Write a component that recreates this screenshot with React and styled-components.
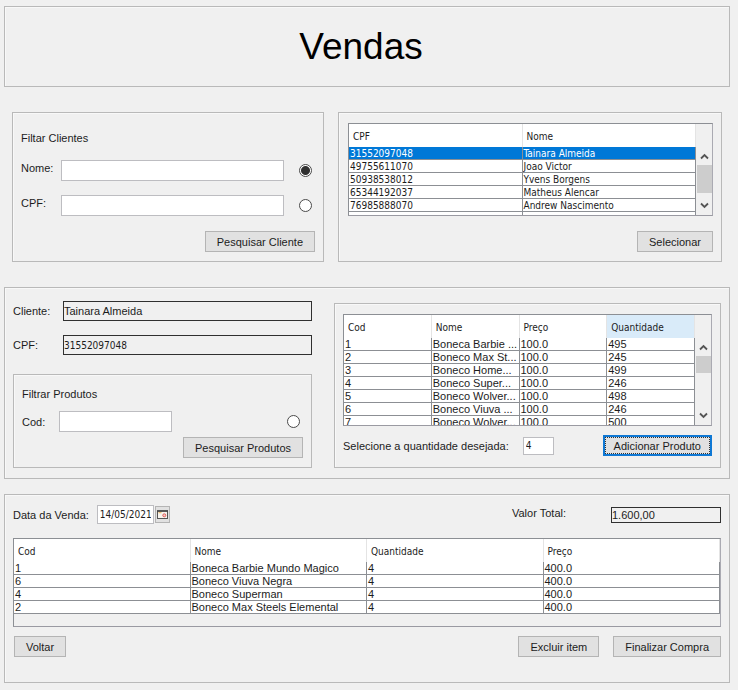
import React, { useState } from "react";
import styled, { createGlobalStyle, css } from "styled-components";

const ui = '"Liberation Sans", Arial, sans-serif';
const small = '"DejaVu Sans Condensed", "Noto Sans", sans-serif';
const line = "#b9b9b9";
const grid = "#8c8f94";

const GlobalStyle = createGlobalStyle`
  * { box-sizing: border-box; }
  body { margin: 0; background: #f0f0f0; color: #1c1c1c; font: 11px/16px ${ui}; }
  button, input { font: inherit; color: inherit; margin: 0; }
`;

const Page = styled.main`
  display: flex;
  flex-direction: column;
  padding: 6px 8px 6px 4px;
`;

const Panel = styled.section`
  border: 1px solid ${line};
  box-shadow: inset 1px 1px 0 #f8f8f8;
`;

const TitlePanel = styled(Panel)`
  padding: 17px 0 18px;
  text-align: center;
`;

const Title = styled.h1`
  margin: 0;
  padding: 1px 12px 0 0;
  font: 400 37px/43px ${ui};
  color: #000;
`;

const ClientRow = styled.div`
  display: grid;
  grid-template-columns: 312fr 384fr;
  gap: 14px;
  margin: 25px 8px;
`;

const ClientFilter = styled(Panel)`
  display: flex;
  flex-direction: column;
  padding: 17px 8px 9px;
`;

const Heading = styled.h2`
  margin: 0;
  font-size: 11px;
  line-height: 16px;
  font-weight: 400;
`;

const FilterLine = styled.div`
  display: grid;
  grid-template-columns: 40px 1fr 14px;
  align-items: center;
  margin-top: 14px;
  padding-right: 2px;
`;

const FilterLabel = styled.label`
  padding-bottom: 5px;
`;

const TextInput = styled.input`
  width: 100%;
  min-width: 0;
  height: 21px;
  padding: 0 3px;
  border: 1px solid #bdbdc1;
  border-radius: 0;
  background: #fff;
  outline: none;
`;

const FilterInput = styled(TextInput)`
  width: calc(100% - 15px);
`;

const Radio = styled.input`
  appearance: none;
  width: 13px;
  height: 13px;
  border: 1px solid #4a4a4a;
  border-radius: 50%;
  background: #fff;
  &:checked {
    background: radial-gradient(circle, #303030 0 4px, #fff 5px);
  }
`;

const Button = styled.button`
  height: 21px;
  padding: 0 11px;
  border: 1px solid #b4b4b4;
  border-radius: 0;
  background: #e1e1e1;
  line-height: 18px;
  white-space: nowrap;
  ${(p) =>
    p.$focused &&
    css`
      padding: 0 9px;
      border: 2px solid #0f78d4;
      outline: 1px dotted #333;
      outline-offset: -3px;
    `}
`;

const Actions = styled.div`
  display: flex;
  justify-content: flex-end;
  margin-top: ${(p) => p.$gap}px;
`;

const ListPanel = styled(Panel)`
  padding: ${(p) => (p.$tight ? "10px 8px 11px" : "10px 8px 9px 9px")};
`;

const Viewport = styled.div`
  display: grid;
  grid-template-columns: ${(p) => (p.$scroll ? "1fr 16px" : "1fr")};
  height: ${(p) => p.$height}px;
  overflow: hidden;
  border: 1px solid ${grid};
  border-right-color: #aaaab2;
  border-bottom-color: #9a9aa2;
`;

const Clip = styled.div`
  overflow: hidden;
`;

const Table = styled.table`
  width: 100%;
  table-layout: fixed;
  border-collapse: separate;
  border-spacing: 0;
`;

const Th = styled.th`
  height: 23px;
  padding: 3px 0 0 4px;
  border-right: 1px solid #e4e4e4;
  background: ${(p) => (p.$hover ? "#d9ebf9" : "#fff")};
  font: 400 10px/18px ${small};
  text-align: left;
`;

const Td = styled.td`
  height: 13px;
  padding: ${(p) => (p.$small ? "1px 0 0 1px" : "0 0 0 1px")};
  overflow: hidden;
  border-right: 1px solid ${grid};
  border-bottom: 1px solid ${grid};
  background: ${(p) => (p.$selected ? "#0078d7" : "#fff")};
  color: ${(p) => (p.$selected ? "#fff" : "inherit")};
  font: ${(p) => (p.$small ? `10px/11px ${small}` : `11px/12px ${ui}`)};
  white-space: nowrap;
`;

const Scrollbar = styled.div`
  display: flex;
  flex-direction: column;
  align-items: center;
  padding: 27px 0 4px 1px;
  background: #f0f0f0;
`;

const Thumb = styled.div`
  width: 100%;
  height: ${(p) => p.$height}px;
  margin: 3px 0 auto;
  background: #cdcdcd;
`;

const Arrow = ({ down }) => (
  <svg width="9" height="11" viewBox="0 0 9 11" aria-hidden="true">
    <path
      d={down ? "M1 3.5 4.5 7 8 3.5" : "M1 7.5 4.5 4 8 7.5"}
      fill="none"
      stroke="#555"
      strokeWidth="1.8"
    />
  </svg>
);

const SalePanel = styled(Panel)`
  display: grid;
  grid-template-columns: 299fr 387fr;
  gap: 22px;
  padding: 13px 8px 10px;
`;

const ClientInfo = styled.div`
  display: flex;
  flex-direction: column;
`;

const InfoLine = styled.div`
  display: grid;
  grid-template-columns: 50px 1fr;
  align-items: center;
  margin-bottom: 14px;
`;

const ReadOnly = styled.input`
  width: 100%;
  min-width: 0;
  height: ${(p) => (p.$short ? 16 : 20)}px;
  padding: 0;
  border: 1px solid #303030;
  border-radius: 0;
  background: #f0f0f0;
  outline: none;
  font: ${(p) => (p.$small ? `10px ${small}` : `11px ${ui}`)};
`;

const ProductFilter = styled(Panel)`
  margin-top: 5px;
  padding: 11px 8px 9px;
`;

const CodLine = styled.div`
  display: grid;
  grid-template-columns: 37px 113px 1fr 14px;
  align-items: center;
  margin-top: 9px;
  padding-right: 2px;
`;

const ProductList = styled(ListPanel)`
  margin-top: 2px;
`;

const QuantityLine = styled.div`
  display: flex;
  align-items: center;
  margin-top: 9px;
`;

const QuantityInput = styled(TextInput)`
  width: 31px;
  height: 18px;
  margin: 0 auto 0 14px;
  padding: 0 2px;
  font: 10px ${small};
`;

const CartPanel = styled(Panel)`
  margin-top: 15px;
  padding: 10px 8px 25px;
`;

const CartTop = styled.div`
  display: flex;
  align-items: center;
  height: 19px;
  margin-bottom: 14px;
`;

const DateInput = styled(TextInput)`
  width: 57px;
  height: 19px;
  margin-left: 8px;
  padding: 0 2px;
  font: 10px ${small};
`;

const CalendarButton = styled.button`
  display: grid;
  place-items: center;
  width: 15px;
  height: 17px;
  margin: 0 auto 0 1px;
  padding: 0;
  border: 1px solid #b4b4b4;
  background: #e1e1e1;
`;

const TotalLabel = styled.label`
  margin-right: 45px;
  padding-bottom: 3px;
`;

const TotalBox = styled.div`
  display: flex;
  width: 110px;
`;

const CartActions = styled.div`
  display: flex;
  gap: 14px;
  margin-top: 9px;
  padding-left: 1px;
`;

const BackButton = styled(Button)`
  margin-right: auto;
`;

const clients = [
  ["31552097048", "Tainara Almeida"],
  ["49755611070", "Joao Victor"],
  ["50938538012", "Yvens Borgens"],
  ["65344192037", "Matheus Alencar"],
  ["76985888070", "Andrew Nascimento"],
  ["", ""],
];

const products = [
  ["1", "Boneca Barbie ...", "100.0", "495"],
  ["2", "Boneco Max St...", "100.0", "245"],
  ["3", "Boneco Home...", "100.0", "499"],
  ["4", "Boneco Super...", "100.0", "246"],
  ["5", "Boneco Wolver...", "100.0", "498"],
  ["6", "Boneco Viuva ...", "100.0", "246"],
  ["7", "Boneco Wolver...", "100.0", "500"],
];

const cart = [
  ["1", "Boneca Barbie Mundo Magico", "4", "400.0"],
  ["6", "Boneco Viuva Negra", "4", "400.0"],
  ["4", "Boneco Superman", "4", "400.0"],
  ["2", "Boneco Max Steels Elemental", "4", "400.0"],
];

function DataTable({ columns, rows, height, thumb, hover, selected, compact }) {
  return (
    <Viewport $height={height} $scroll={Boolean(thumb)}>
      <Clip>
        <Table>
          <thead>
            <tr>
              {columns.map((c) => (
                <Th key={c} $hover={c === hover}>{c}</Th>
              ))}
            </tr>
          </thead>
          <tbody>
            {rows.map((row, i) => (
              <tr key={i}>
                {row.map((cell, j) => (
                  <Td key={j} $small={compact} $selected={i === selected}>{cell}</Td>
                ))}
              </tr>
            ))}
          </tbody>
        </Table>
      </Clip>
      {thumb && (
        <Scrollbar>
          <Arrow />
          <Thumb $height={thumb} />
          <Arrow down />
        </Scrollbar>
      )}
    </Viewport>
  );
}

export default function App() {
  const [filter, setFilter] = useState("nome");
  return (
    <>
      <GlobalStyle />
      <Page>
        <TitlePanel>
          <Title>Vendas</Title>
        </TitlePanel>

        <ClientRow>
          <ClientFilter>
            <Heading>Filtar Clientes</Heading>
            <FilterLine>
              <FilterLabel htmlFor="nome">Nome:</FilterLabel>
              <FilterInput id="nome" />
              <Radio type="radio" name="filtro" aria-label="Filtrar por nome" checked={filter === "nome"} onChange={() => setFilter("nome")} />
            </FilterLine>
            <FilterLine>
              <FilterLabel htmlFor="cpf">CPF:</FilterLabel>
              <FilterInput id="cpf" />
              <Radio type="radio" name="filtro" aria-label="Filtrar por CPF" checked={filter === "cpf"} onChange={() => setFilter("cpf")} />
            </FilterLine>
            <Actions $gap={15}>
              <Button type="button">Pesquisar Cliente</Button>
            </Actions>
          </ClientFilter>
          <ListPanel>
            <DataTable columns={["CPF", "Nome"]} rows={clients} height={93} thumb={28} selected={0} compact />
            <Actions $gap={15}>
              <Button type="button">Selecionar</Button>
            </Actions>
          </ListPanel>
        </ClientRow>

        <SalePanel>
          <ClientInfo>
            <InfoLine>
              <label htmlFor="cliente">Cliente:</label>
              <ReadOnly id="cliente" readOnly value="Tainara Almeida" />
            </InfoLine>
            <InfoLine>
              <label htmlFor="cliente-cpf">CPF:</label>
              <ReadOnly id="cliente-cpf" readOnly value="31552097048" $small />
            </InfoLine>
            <ProductFilter>
              <Heading>Filtrar Produtos</Heading>
              <CodLine>
                <label htmlFor="cod">Cod:</label>
                <TextInput id="cod" />
                <span />
                <Radio type="radio" name="produto" aria-label="Filtrar por código" />
              </CodLine>
              <Actions $gap={5}>
                <Button type="button">Pesquisar Produtos</Button>
              </Actions>
            </ProductFilter>
          </ClientInfo>
          <ProductList $tight>
            <DataTable columns={["Cod", "Nome", "Preço", "Quantidade"]} rows={products} height={112} thumb={17} hover="Quantidade" />
            <QuantityLine>
              <label htmlFor="qtd">Selecione a quantidade desejada:</label>
              <QuantityInput id="qtd" defaultValue="4" />
              <Button type="button" $focused>Adicionar Produto</Button>
            </QuantityLine>
          </ProductList>
        </SalePanel>

        <CartPanel>
          <CartTop>
            <label htmlFor="data">Data da Venda:</label>
            <DateInput id="data" defaultValue="14/05/2021" />
            <CalendarButton type="button" aria-label="Abrir calendário">
              <svg width="11" height="9" viewBox="0 0 11 9" aria-hidden="true">
                <rect x="0.5" y="1" width="10" height="7.5" fill="#f7f4ee" stroke="#555" />
                <path d="M0 1h11" stroke="#444" strokeWidth="1.6" />
                <path d="M1.5 2.7h3" stroke="#e5b45c" />
                <circle cx="7.3" cy="5.3" r="1.5" fill="#f6c9c6" stroke="#e0605c" />
              </svg>
            </CalendarButton>
            <TotalLabel htmlFor="total">Valor Total:</TotalLabel>
            <TotalBox>
              <ReadOnly id="total" readOnly value="1.600,00" $short />
            </TotalBox>
          </CartTop>
          <DataTable columns={["Cod", "Nome", "Quantidade", "Preço"]} rows={cart} height={89} />
          <CartActions>
            <BackButton type="button">Voltar</BackButton>
            <Button type="button">Excluir item</Button>
            <Button type="button">Finalizar Compra</Button>
          </CartActions>
        </CartPanel>
      </Page>
    </>
  );
}
